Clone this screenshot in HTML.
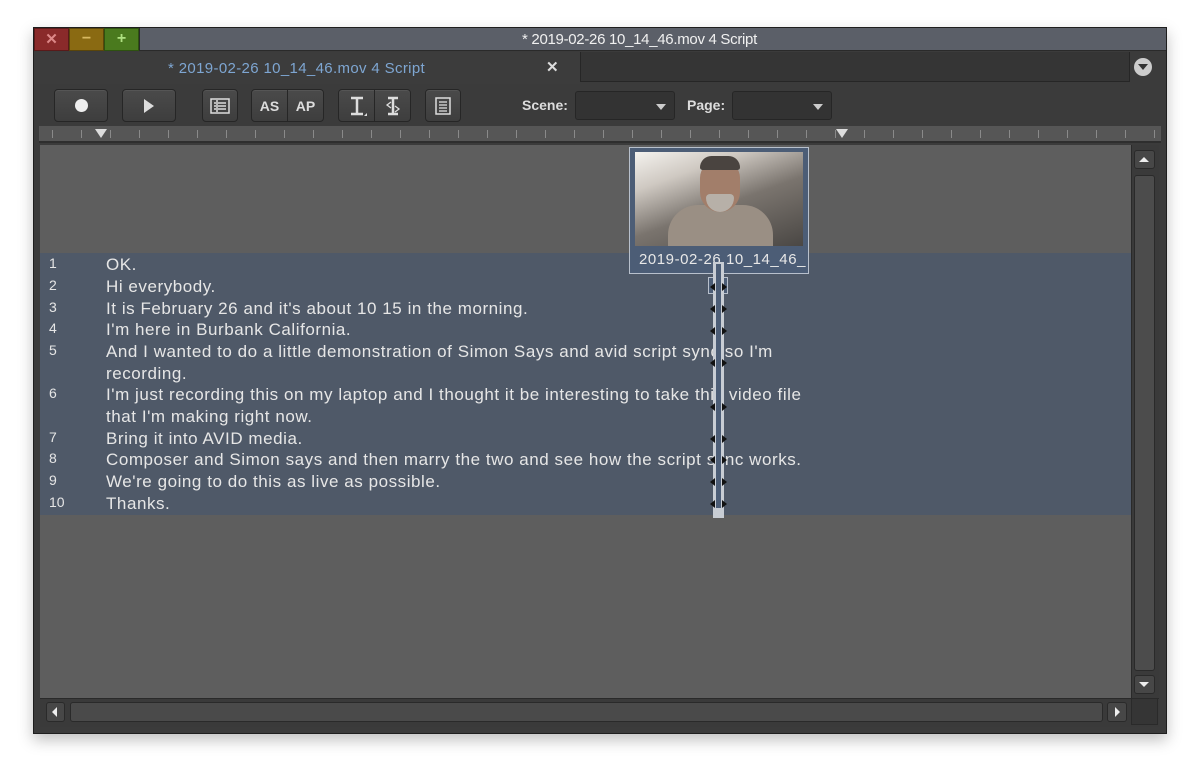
<!DOCTYPE html>
<html><head><style>
*{margin:0;padding:0;box-sizing:border-box}
body{width:1200px;height:773px;background:#fff;position:relative;overflow:hidden;font-family:"Liberation Sans",sans-serif}
.a{position:absolute}
.btn{position:absolute;top:89px;height:33px;background:linear-gradient(#4a4a4a,#3e3e3e);border:1px solid #262626;border-radius:4px;box-shadow:inset 0 1px 0 #555;color:#ddd;font-size:14px;font-weight:bold;display:flex;align-items:center;justify-content:center}
.dd{position:absolute;top:91px;height:29px;background:#333;border:1px solid #262626;border-radius:3px}
.dd:after{content:"";position:absolute;right:8px;top:12px;border-left:5px solid transparent;border-right:5px solid transparent;border-top:6px solid #ccc}
.ln{position:absolute;left:0;width:1091px;font-size:17px;letter-spacing:0.55px;color:#e6e6e6;height:22px;line-height:22px}
.ln b{position:absolute;left:9px;top:-2px;font-weight:normal;font-size:14px;letter-spacing:0;color:#e6e6e6}
.ln span{position:absolute;left:66px;white-space:nowrap}
.mk{position:absolute;left:709px;width:20px;height:10px}
.mk:before{content:"";position:absolute;left:1px;top:1px;border-top:4px solid transparent;border-bottom:4px solid transparent;border-right:5px solid #111}
.mk:after{content:"";position:absolute;left:13px;top:1px;border-top:4px solid transparent;border-bottom:4px solid transparent;border-left:5px solid #111}
</style></head><body>
<div class="a" style="left:33px;top:27px;width:1134px;height:707px;background:#3b3b3b;border:1px solid #1e1e1e;box-shadow:0 6px 14px rgba(0,0,0,.25)"></div>
<div class="a" style="left:34px;top:28px;width:1132px;height:23px;background:#5b5f68;border-bottom:1px solid #2a2a2a"></div>
<div class="a" style="left:34px;top:28px;width:35px;height:23px;background:#8a2a2a;border:1px solid #5a1a1a;color:#d88;font-size:15px;font-weight:bold;text-align:center;line-height:21px">✕</div>
<div class="a" style="left:69px;top:28px;width:35px;height:23px;background:#8a6a12;border:1px solid #5a450a;color:#d8b860;font-size:16px;font-weight:bold;text-align:center;line-height:20px">−</div>
<div class="a" style="left:104px;top:28px;width:35px;height:23px;background:#4a7a1e;border:1px solid #2e5210;color:#aee080;font-size:16px;font-weight:bold;text-align:center;line-height:20px">+</div>
<div class="a" style="left:139px;top:28px;width:1027px;height:23px;border-left:1px solid #2a2a2a"></div>
<div class="a" style="left:522px;top:31px;font-size:15px;color:#f0f0f0;letter-spacing:-0.3px">* 2019-02-26 10_14_46.mov 4 Script</div>
<div class="a" style="left:34px;top:52px;width:546px;height:32px;background:#3c3c3c"></div>
<div class="a" style="left:168px;top:60px;font-size:15px;color:#7ea6d2;letter-spacing:0.35px">* 2019-02-26 10_14_46.mov 4 Script</div>
<div class="a" style="left:546px;top:58px;font-size:15px;color:#ddd;font-weight:bold">✕</div>
<div class="a" style="left:580px;top:52px;width:550px;height:30px;background:#353535;border:1px solid #262626;border-top:none"></div>
<div class="a" style="left:1134px;top:58px;width:18px;height:18px;border-radius:9px;background:#ccc"></div>
<div class="a" style="left:1138px;top:64px;border-left:5px solid transparent;border-right:5px solid transparent;border-top:6px solid #333"></div>
<div class="btn" style="left:54px;width:54px"><div style="width:13px;height:13px;border-radius:7px;background:#eee"></div></div>
<div class="btn" style="left:122px;width:54px"><div style="border-top:7px solid transparent;border-bottom:7px solid transparent;border-left:10px solid #ddd"></div></div>
<div class="btn" style="left:202px;width:36px"><svg width="20" height="16"><rect x="1" y="1" width="18" height="14" fill="none" stroke="#ddd" stroke-width="1.5"/><g stroke="#ddd" stroke-width="1.5"><line x1="4" y1="5" x2="6" y2="5"/><line x1="4" y1="8" x2="6" y2="8"/><line x1="4" y1="11" x2="6" y2="11"/><line x1="8" y1="5" x2="16" y2="5"/><line x1="8" y1="8" x2="16" y2="8"/><line x1="8" y1="11" x2="16" y2="11"/><line x1="7" y1="2" x2="7" y2="14"/></g></svg></div>
<div class="btn" style="left:251px;width:37px;border-radius:4px 0 0 4px">AS</div>
<div class="btn" style="left:287px;width:37px;border-radius:0 4px 4px 0">AP</div>
<div class="btn" style="left:338px;width:37px;border-radius:4px 0 0 4px"><svg width="20" height="22"><path d="M4 3h12M10 3v16M4 19h12" stroke="#ddd" stroke-width="2.5" fill="none"/><path d="M17 21l3-3v3z" fill="#ddd"/></svg></div>
<div class="btn" style="left:374px;width:37px;border-radius:0 4px 4px 0"><svg width="20" height="22"><path d="M5 3h10M10 3v16M5 19h10" stroke="#ddd" stroke-width="2.5" fill="none"/><path d="M8 7l-4 3 4 3M12 11l4 3-4 3" stroke="#ddd" stroke-width="1.3" fill="none"/></svg></div>
<div class="btn" style="left:425px;width:36px"><svg width="16" height="18"><rect x="1" y="1" width="14" height="16" fill="none" stroke="#ddd" stroke-width="1.5"/><g stroke="#ddd" stroke-width="1.3"><line x1="4" y1="5" x2="12" y2="5"/><line x1="4" y1="8" x2="12" y2="8"/><line x1="4" y1="11" x2="12" y2="11"/><line x1="4" y1="14" x2="12" y2="14"/></g></svg></div>
<div class="a" style="left:522px;top:97px;font-size:14px;color:#ddd;font-weight:bold">Scene:</div>
<div class="dd" style="left:575px;width:100px"></div>
<div class="a" style="left:687px;top:97px;font-size:14px;color:#ddd;font-weight:bold">Page:</div>
<div class="dd" style="left:732px;width:100px"></div>
<div class="a" style="left:39px;top:126px;width:1122px;height:17px;background:#565656;border-bottom:2px solid #2e2e2e;background-image:repeating-linear-gradient(90deg,transparent 0 15px,#8a8a8a 15px 16px,transparent 16px 29px);background-size:29px 8px;background-repeat:repeat-x;background-position:-2px 4px"></div>
<div class="a" style="left:95px;top:129px;border-left:6px solid transparent;border-right:6px solid transparent;border-top:9px solid #ddd"></div>
<div class="a" style="left:836px;top:129px;border-left:6px solid transparent;border-right:6px solid transparent;border-top:9px solid #ddd"></div>
<div class="a" style="left:40px;top:145px;width:1091px;height:553px;background:#5e5e5e">
<div class="a" style="left:0;top:108px;width:1091px;height:262px;background:#4f5968"></div>
<div class="ln" style="top:109px"><b>1</b><span>OK.</span></div>
<div class="ln" style="top:131px"><b>2</b><span>Hi everybody.</span></div>
<div class="ln" style="top:153px"><b>3</b><span>It is February 26 and it's about 10 15 in the morning.</span></div>
<div class="ln" style="top:174px"><b>4</b><span>I'm here in Burbank California.</span></div>
<div class="ln" style="top:196px"><b>5</b><span>And I wanted to do a little demonstration of Simon Says and avid script sync so I'm</span></div>
<div class="ln" style="top:218px"><span>recording.</span></div>
<div class="ln" style="top:239px"><b>6</b><span>I'm just recording this on my laptop and I thought it be interesting to take this video file</span></div>
<div class="ln" style="top:261px"><span>that I'm making right now.</span></div>
<div class="ln" style="top:283px"><b>7</b><span>Bring it into AVID media.</span></div>
<div class="ln" style="top:304px"><b>8</b><span>Composer and Simon says and then marry the two and see how the script sync works.</span></div>
<div class="ln" style="top:326px"><b>9</b><span>We're going to do this as live as possible.</span></div>
<div class="ln" style="top:348px"><b>10</b><span>Thanks.</span></div>
</div>
<div class="a" style="left:629px;top:147px;width:180px;height:127px;background:#4c5d76;border:1px solid #b8c0cc"></div>
<div class="a" style="left:635px;top:152px;width:168px;height:94px;background:linear-gradient(160deg,#f4f2ee 0%,#cfc9c2 25%,#7a746e 55%,#4a4744 100%)"></div>
<div class="a" style="left:668px;top:205px;width:105px;height:41px;background:#9a8f84;border-radius:30px 30px 0 0"></div>
<div class="a" style="left:700px;top:160px;width:40px;height:52px;background:#a27e6a;border-radius:18px 18px 20px 20px"></div>
<div class="a" style="left:700px;top:156px;width:40px;height:14px;background:#4a4440;border-radius:18px 18px 4px 4px"></div>
<div class="a" style="left:706px;top:194px;width:28px;height:18px;background:#b7b0a8;border-radius:4px 4px 14px 14px"></div>
<div class="a" style="left:639px;top:251px;font-size:15px;color:#e8e8e8;letter-spacing:0.55px">2019-02-26 10_14_46_</div>
<div class="a" style="left:708px;top:277px;width:20px;height:17px;background:#4c5d76;border:1px solid #b8c0cc"></div>
<div class="a" style="left:713px;top:262px;width:11px;height:256px;background:#c8cdd4"></div>
<div class="a" style="left:716px;top:264px;width:5px;height:244px;background:#4c5d76"></div>
<div class="mk" style="top:282px"></div>
<div class="mk" style="top:304px"></div>
<div class="mk" style="top:326px"></div>
<div class="mk" style="top:358px"></div>
<div class="mk" style="top:402px"></div>
<div class="mk" style="top:434px"></div>
<div class="mk" style="top:455px"></div>
<div class="mk" style="top:477px"></div>
<div class="mk" style="top:499px"></div>
<div class="a" style="left:1131px;top:145px;width:28px;height:553px;background:#3a3a3a;border-left:1px solid #2a2a2a"></div>
<div class="a" style="left:1134px;top:150px;width:21px;height:19px;background:#474747;border:1px solid #2a2a2a;border-radius:3px"></div>
<div class="a" style="left:1139px;top:157px;border-left:5px solid transparent;border-right:5px solid transparent;border-bottom:5px solid #eee"></div>
<div class="a" style="left:1134px;top:175px;width:21px;height:496px;background:#4c4c4c;border:1px solid #2a2a2a;border-radius:3px"></div>
<div class="a" style="left:1134px;top:675px;width:21px;height:19px;background:#474747;border:1px solid #2a2a2a;border-radius:3px"></div>
<div class="a" style="left:1139px;top:682px;border-left:5px solid transparent;border-right:5px solid transparent;border-top:5px solid #eee"></div>
<div class="a" style="left:40px;top:698px;width:1119px;height:29px;background:#3a3a3a;border-top:1px solid #2a2a2a"></div>
<div class="a" style="left:46px;top:702px;width:19px;height:20px;background:#474747;border:1px solid #2a2a2a;border-radius:3px"></div>
<div class="a" style="left:52px;top:707px;border-top:5px solid transparent;border-bottom:5px solid transparent;border-right:5px solid #eee"></div>
<div class="a" style="left:70px;top:702px;width:1033px;height:20px;background:#4a4a4a;border:1px solid #2a2a2a;border-radius:3px"></div>
<div class="a" style="left:1107px;top:702px;width:20px;height:20px;background:#474747;border:1px solid #2a2a2a;border-radius:3px"></div>
<div class="a" style="left:1115px;top:707px;border-top:5px solid transparent;border-bottom:5px solid transparent;border-left:5px solid #eee"></div>
<div class="a" style="left:1131px;top:698px;width:27px;height:27px;background:#353535;border:1px solid #2a2a2a"></div>
</body></html>
